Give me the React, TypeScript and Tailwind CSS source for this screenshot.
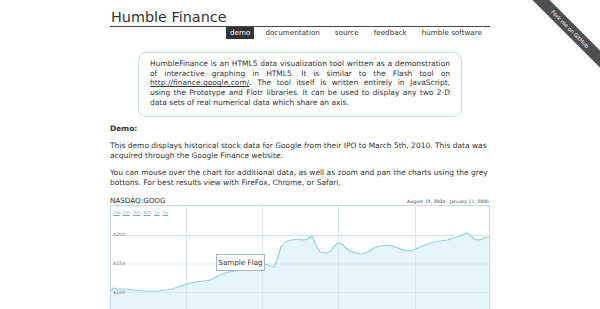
import React from "react";

const navItems = ["demo", "documentation", "source", "feedback", "humble software"];

// price series in page coordinates (chart box starts at 110, 206)
const points: [number, number][] = [
  [110, 292], [114, 289], [118, 290], [126, 290], [134, 291], [142, 292], [150, 292], [158, 292],
  [166, 291], [172, 290], [178, 288], [184, 286], [190, 284], [196, 283], [204, 282], [210, 281],
  [216, 278], [222, 275], [228, 273], [236, 272], [244, 271], [252, 270], [258, 269], [262, 266],
  [266, 265], [270, 267], [274, 268], [278, 258], [281, 248], [284, 244], [288, 242], [292, 241],
  [298, 240], [304, 241], [308, 240], [312, 237], [316, 246], [320, 253], [326, 254], [331, 252],
  [334, 247], [338, 244], [342, 245], [346, 249], [350, 252], [356, 254], [362, 255], [368, 253],
  [374, 249], [380, 247], [386, 246], [392, 247], [398, 249], [404, 251], [410, 252], [416, 250],
  [422, 247], [428, 245], [434, 243], [440, 242], [448, 241], [454, 239], [460, 237], [466, 234],
  [470, 236], [474, 240], [480, 241], [484, 239], [490, 238],
];

function StockChart() {
  const line = points.map(([x, y]) => `${x},${y}`).join(" ");
  const area = `110,320 ${line} 490,320`;

  return (
    <div className="relative h-[104px] w-[380px]">
      <svg width="380" height="104" className="block">
        <g transform="translate(-110,-206)">
          <polygon points={area} fill="#e6f4fb" />
          {[186, 262, 338, 415].map((x) => (
            <line key={x} x1={x + 0.5} y1={206} x2={x + 0.5} y2={320} stroke="#dbe9ef" strokeWidth="1" />
          ))}
          {[236, 264.5, 293].map((y) => (
            <line key={y} x1={110} y1={y + 0.5} x2={490} y2={y + 0.5} stroke="#dbe9ef" strokeWidth="1" />
          ))}
          <polyline points={line} fill="none" stroke="#8fd1e2" strokeWidth="1.2" strokeLinejoin="round" />
          <path d="M110.5 320 V206.5 H489.5 V320" fill="none" stroke="#c6dbe6" strokeWidth="1" />
        </g>
      </svg>

      <div className="absolute left-[3px] top-[5px] flex gap-[3px] text-[4.6px] leading-[5px] text-[#7aa6d6] underline">
        <span>1w</span>
        <span>1m</span>
        <span>3m</span>
        <span>6m</span>
        <span>1y</span>
        <span>5y</span>
      </div>

      <span className="absolute left-[3px] top-[27px] text-[4.8px] leading-[5px] text-[#777]">$200</span>
      <span className="absolute left-[3px] top-[56px] text-[4.8px] leading-[5px] text-[#777]">$150</span>
      <span className="absolute left-[3px] top-[85px] text-[4.8px] leading-[5px] text-[#777]">$100</span>

      <div className="absolute left-[106px] top-[49px] h-[17px] w-[49px] border border-[#a9b8c4] bg-white text-center text-[7.2px] leading-[15px] text-[#333]">
        Sample Flag
      </div>
    </div>
  );
}

export default function App() {
  return (
    <div className="relative min-h-screen overflow-hidden bg-white font-['DejaVu_Sans',sans-serif] text-[#333]">
      {/* github ribbon */}
      <div className="pointer-events-none absolute right-0 top-0 h-[90px] w-[90px] overflow-hidden">
        <div className="absolute left-[0px] top-[23px] flex h-[12px] w-[120px] rotate-45 items-center justify-center bg-[#4f4f4f] text-[5.4px] text-white">
          Fork me on GitHub
        </div>
      </div>

      <div className="mx-auto w-[380px] pt-[8px]">
        <h1 className="border-b border-[#444] pl-[1px] text-[14.4px] font-normal leading-[18px] text-[#333]">
          Humble Finance
        </h1>

        <ul className="flex justify-end gap-[7px] pr-[4px] text-[7.2px] leading-[12px]">
          {navItems.map((item) => (
            <li
              key={item}
              className={`px-[4px] ${item === "demo" ? "bg-[#333] text-white" : "text-[#333]"}`}
            >
              {item}
            </li>
          ))}
        </ul>

        <div className="mx-auto mt-[13px] w-[324px] rounded-[8px] border border-[#cddfe9] px-[11px] pb-[8px] pt-[6px] text-[7.5px] leading-[9.7px]">
          <span className="block text-justify [text-align-last:justify]">
            HumbleFinance is an HTML5 data visualization tool written as a demonstration
          </span>
          <span className="block text-justify [text-align-last:justify]">
            of interactive graphing in HTML5. It is similar to the Flash tool on
          </span>
          <span className="block text-justify [text-align-last:justify]">
            <span className="underline">http://finance.google.com/</span>. The tool itself is written entirely in JavaScript,
          </span>
          <span className="block text-justify [text-align-last:justify]">
            using the Prototype and Flotr libraries. It can be used to display any two 2-D
          </span>
          <span className="block">data sets of real numerical data which share an axis.</span>
        </div>

        <div className="mt-[7px] text-[7.5px] leading-[10px]">
          <p className="font-bold">Demo:</p>
          <p className="mt-[7px]">
            This demo displays historical stock data for Google from their IPO to March 5th, 2010. This
            data was acquired through the Google Finance website.
          </p>
          <p className="mt-[7px]">
            You can mouse over the chart for additional data, as well as zoom and pan the charts using
            the grey bottons. For best results view with FireFox, Chrome, or Safari.
          </p>
        </div>

        <div className="mt-[9px]">
          <div className="flex items-end justify-between">
            <span className="text-[7.2px] leading-[8px] text-[#333]">NASDAQ:GOOG</span>
            <span className="pb-[1px] pr-[1px] text-[4.6px] leading-[5px] text-[#444]">
              August 19, 2004 - January 11, 2005
            </span>
          </div>
          <StockChart />
        </div>
      </div>
    </div>
  );
}
